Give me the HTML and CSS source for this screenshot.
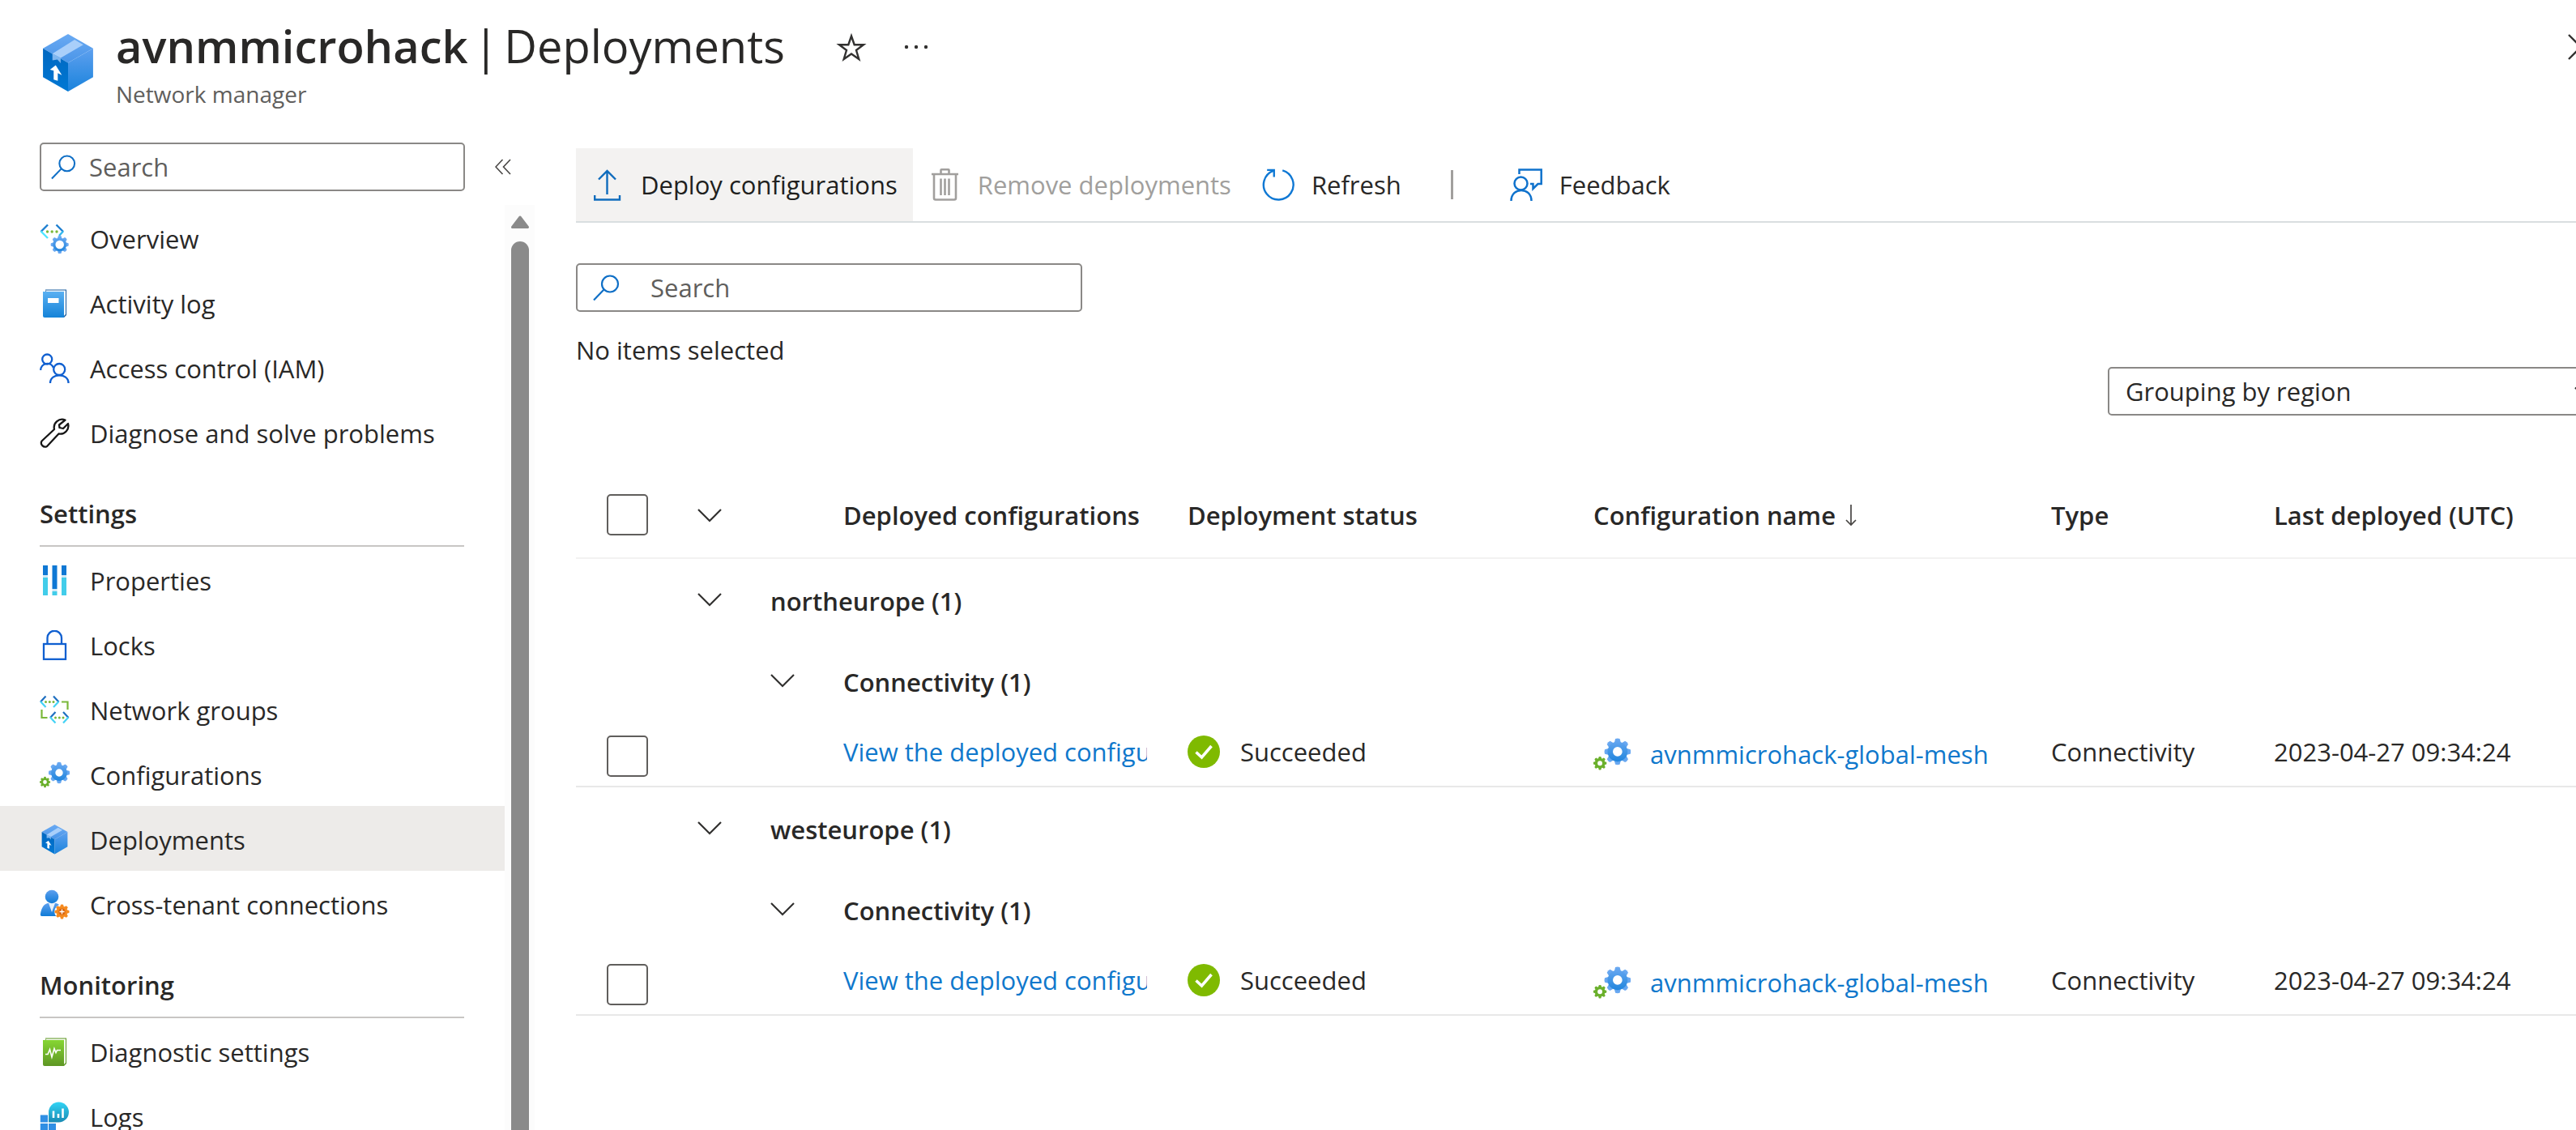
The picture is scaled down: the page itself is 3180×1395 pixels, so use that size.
FILE: index.html
```html
<!DOCTYPE html>
<html lang="en">
<head>
<meta charset="utf-8">
<meta name="viewport" content="width=device-width, initial-scale=1">
<title>avnmmicrohack | Deployments</title>
<link rel="stylesheet" href="styles.css">
</head>
<body>

<!-- Shared icon symbols -->
<svg class="sprite" aria-hidden="true">
  <defs>
    <linearGradient id="box-right" x1="0" y1="0" x2="0" y2="1"><stop offset="0" stop-color="#5ea0ef"/><stop offset="1" stop-color="#1a83dc"/></linearGradient>
    <linearGradient id="box-left" x1="0" y1="0" x2="0" y2="1"><stop offset="0" stop-color="#0067c0"/><stop offset="1" stop-color="#0078d4"/></linearGradient>
    <linearGradient id="box-top" x1="0" y1="0" x2="0" y2="1"><stop offset="0" stop-color="#6aaaf3"/><stop offset="1" stop-color="#4a95e8"/></linearGradient>
    <linearGradient id="gear-blue" gradientUnits="userSpaceOnUse" x1="0" y1="-10" x2="0" y2="10"><stop offset="0" stop-color="#6daaf2"/><stop offset="1" stop-color="#1580da"/></linearGradient>
    <linearGradient id="book-blue" x1="0" y1="0" x2="0" y2="1"><stop offset="0" stop-color="#5ab0f2"/><stop offset="1" stop-color="#1583d8"/></linearGradient>
    <linearGradient id="book-green" x1="0" y1="0" x2="0" y2="1"><stop offset="0" stop-color="#86d633"/><stop offset="1" stop-color="#5e9624"/></linearGradient>
    <linearGradient id="logs-teal" x1="0" y1="0" x2="0" y2="1"><stop offset="0" stop-color="#32d4f5"/><stop offset="1" stop-color="#198ab3"/></linearGradient>
    <linearGradient id="person-blue" x1="0" y1="0" x2="0" y2="1"><stop offset="0" stop-color="#5ea0ef"/><stop offset="1" stop-color="#0f7bd7"/></linearGradient>
    <path id="tooth" d="M-1.7 -9.8Q0 -10.4 1.7 -9.8L2.7 -6H-2.7Z"/>
    <g id="teeth">
      <use href="#tooth"/><use href="#tooth" transform="rotate(45)"/><use href="#tooth" transform="rotate(90)"/><use href="#tooth" transform="rotate(135)"/>
      <use href="#tooth" transform="rotate(180)"/><use href="#tooth" transform="rotate(225)"/><use href="#tooth" transform="rotate(270)"/><use href="#tooth" transform="rotate(315)"/>
    </g>
    <path id="gear" fill-rule="evenodd" d="M0 -7.6A7.6 7.6 0 1 1 0 7.6A7.6 7.6 0 1 1 0 -7.6ZM0 -3.6A3.6 3.6 0 1 0 0 3.6A3.6 3.6 0 1 0 0 -3.6Z"/>
  </defs>
  <symbol id="i-box" viewBox="0 0 71 71">
    <path fill="url(#box-top)" d="M35.5 0L66 17.5L35.5 35L5 17.5Z"/>
    <path fill="url(#box-left)" d="M5 17.5L35.5 35V70L5 52.5Z"/>
    <path fill="url(#box-right)" d="M66 17.5L35.5 35V70L66 52.5Z"/>
    <path fill="#a9cffa" d="M43.500 7L54 13L26.500 29L16.500 24Z"/>
    <path fill="#7fb6ef" d="M16.500 24L26.500 29V35.500L22.500 31L16.500 32Z"/>
    <path fill="#fff" d="M20.500 38L13.500 43.500L18 44.500V55.500L23 57V47.500L28 50Z"/>
  </symbol>
  <symbol id="i-gears" viewBox="0 0 37 37">
    <g transform="translate(24 16) scale(1.3)" fill="url(#gear-blue)"><use href="#teeth"/><use href="#gear"/></g>
    <g transform="translate(6.500 27.500) scale(.66)" fill="#6bb02c"><use href="#teeth"/><use href="#gear"/></g>
  </symbol>
  <symbol id="i-search" viewBox="0 0 33 33">
    <g fill="none" stroke="#0f6fc6" stroke-width="2.200"><circle cx="21" cy="11.500" r="10"/><path d="M13.500 18.500L1 31.500"/></g>
  </symbol>
  <symbol id="i-chevron" viewBox="0 0 30 30">
    <path d="M1 8L15 22L29 8" fill="none" stroke="#323130" stroke-width="2.200"/>
  </symbol>
  <symbol id="i-check" viewBox="0 0 40 40">
    <circle cx="20" cy="20" r="20" fill="#7fba00"/><path d="M10.500 20.500L17.500 27L29.500 13" fill="none" stroke="#fff" stroke-width="3.600"/>
  </symbol>
</svg>

<div class="blade">
  <header class="header">
    <svg class="header-icon" aria-hidden="true"><use href="#i-box"/></svg>
    <div class="header-text">
      <div class="title-row">
        <h1 class="title"><strong>avnmmicrohack</strong><span>|</span><span>Deployments</span></h1>
        <button class="icon-button star" type="button" aria-label="Add to favorites">
          <svg viewBox="0 0 40 40" aria-hidden="true"><path d="M20 6.500L23.700 17.200H35L26 24L29.300 35L20 28.500L10.700 35L14 24L5 17.200H16.300Z" fill="none" stroke="#323130" stroke-width="2.400"/></svg>
        </button>
        <button class="icon-button more" type="button" aria-label="More">
          <svg viewBox="0 0 40 40" aria-hidden="true"><g fill="#323130"><circle cx="8" cy="20" r="2.200"/><circle cx="20" cy="20" r="2.200"/><circle cx="32" cy="20" r="2.200"/></g></svg>
        </button>
      </div>
      <p class="subtitle">Network manager</p>
    </div>
    <button class="icon-button close" type="button" aria-label="Close">
      <svg viewBox="0 0 40 40" aria-hidden="true"><path d="M5 7L35 37M35 7L5 37" stroke="#323130" stroke-width="2.400"/></svg>
    </button>
  </header>

  <div class="body">
    <aside class="sidebar">
      <div class="sidebar-top">
        <div class="field sidebar-field">
          <svg class="field-icon" aria-hidden="true"><use href="#i-search"/></svg>
          <input type="search" placeholder="Search" aria-label="Search menu">
        </div>
        <button class="collapse" type="button" aria-label="Collapse menu">
          <svg viewBox="0 0 20 20" aria-hidden="true"><path d="M9.500 1L1 10L9.500 19M19 1L10.500 10L19 19" fill="none" stroke="#484644" stroke-width="1.600"/></svg>
        </button>
      </div>
      <div class="scroller">
        <nav class="nav" aria-label="Resource menu">
          <a class="nav-item" href="#">
            <svg viewBox="0 0 37 37" aria-hidden="true">
              <g fill="none" stroke-width="2.400"><path d="M10 1.500L1.500 10" stroke="#1e7fd0"/><path d="M1.500 9.500L10 18" stroke="#50e6ff"/><path d="M20.500 1.500L29 10" stroke="#1e7fd0"/><path d="M29 9.500L24 15" stroke="#32b8ee"/></g>
              <g fill="#7ab83a"><circle cx="9.500" cy="10" r="1.700"/><circle cx="15.200" cy="10" r="1.700"/><circle cx="21" cy="10" r="1.700"/></g>
              <g transform="translate(24.700 26) scale(1.100)" fill="url(#gear-blue)"><use href="#teeth"/><use href="#gear"/><circle r="4.800" fill="#fff"/></g>
            </svg>Overview</a>
          <a class="nav-item" href="#">
            <svg viewBox="0 0 37 37" aria-hidden="true"><path d="M7 1.500H33V33L30 36H7Z" fill="#1b5c9e"/><path d="M7 2.500H32V32L30 34Z" fill="#f4f9fe"/><path d="M4 4H30V36H6Q4 36 4 34Z" fill="url(#book-blue)"/><rect x="10" y="12" width="13.500" height="6" fill="#fff"/></svg>Activity log</a>
          <a class="nav-item" href="#">
            <svg viewBox="0 0 37 37" aria-hidden="true"><g fill="none" stroke="#0f5fd0" stroke-width="2.300"><circle cx="9.200" cy="7.500" r="6"/><path d="M1.200 21A8.200 8.200 0 0 1 17 18"/><circle cx="24.200" cy="20" r="7"/><path d="M13 37C13 24 35.500 24 35.500 37"/></g></svg>Access control (IAM)</a>
          <a class="nav-item" href="#">
            <svg viewBox="0 0 37 37" aria-hidden="true"><path d="M31.500 2.500A10 10 0 0 0 18 14L2.500 28.500A4.800 4.800 0 0 0 9 35L23.500 19.500A10 10 0 0 0 35 7L29 13L24.500 12L24 8.500Z" fill="none" stroke="#161616" stroke-width="2.300" stroke-linejoin="round"/></svg>Diagnose and solve problems</a>

          <h2 class="nav-heading">Settings</h2>
          <a class="nav-item" href="#">
            <svg viewBox="0 0 37 37" aria-hidden="true"><g fill="#0f78d4"><rect x="4" width="6" height="12"/><rect x="15.500" width="6" height="29"/><rect x="27" width="6" height="12"/></g><g fill="#cfe9f7"><rect x="4" y="12" width="6" height="3"/><rect x="15.500" y="29" width="6" height="3"/><rect x="27" y="12" width="6" height="3"/></g><g fill="#42cdea"><rect x="4" y="15" width="6" height="22"/><rect x="15.500" y="32" width="6" height="5"/><rect x="27" y="15" width="6" height="22"/></g></svg>Properties</a>
          <a class="nav-item" href="#">
            <svg viewBox="0 0 37 37" aria-hidden="true"><g fill="none" stroke="#0f5fd0" stroke-width="2.300"><path d="M9.500 17V9.500A8.700 8.700 0 0 1 27 9.500V17"/><rect x="5" y="17" width="27" height="18.800"/></g></svg>Locks</a>
          <a class="nav-item" href="#">
            <svg viewBox="0 0 37 37" aria-hidden="true">
              <g fill="none" stroke-width="2.200"><path d="M7.500 1.500L1 8.500M17 1.500L23.500 8.500M19.500 21L13 28M29 21L35.500 28" stroke="#1e6fc0"/><path d="M1 8L7.500 15M23.500 8L17 15M13 27.500L19.500 34.500M35.500 27.500L29 34.500" stroke="#45d3f5"/><path d="M27 8.500H34.500V18M2.500 18V28H9.500" stroke="#7ab83a"/></g>
              <g fill="#7ab83a"><circle cx="7.500" cy="8.500" r="1.500"/><circle cx="12.300" cy="8.500" r="1.500"/><circle cx="17" cy="8.500" r="1.500"/><circle cx="19.500" cy="28" r="1.500"/><circle cx="24.300" cy="28" r="1.500"/><circle cx="29" cy="28" r="1.500"/></g>
            </svg>Network groups</a>
          <a class="nav-item" href="#"><svg aria-hidden="true"><use href="#i-gears"/></svg>Configurations</a>
          <a class="nav-item selected" href="#" aria-current="page"><svg aria-hidden="true"><use href="#i-box"/></svg>Deployments</a>
          <a class="nav-item" href="#">
            <svg viewBox="0 0 37 37" aria-hidden="true"><path d="M.8 31C2 22 6 17.500 10 17H20C25 18 28 23 28.500 33H2.500Q.8 33 .8 31Z" fill="url(#person-blue)"/><path d="M11 17H19L15 28Z" fill="#e6f1fc"/><circle cx="15" cy="9" r="8.300" fill="url(#person-blue)"/><circle cx="27.500" cy="27.500" r="9.300" fill="#fff"/><g transform="translate(27.500 27.500) scale(.9)" fill="#f58a1f"><use href="#teeth"/><circle r="7.600"/></g><circle cx="27.500" cy="27.500" r="4" fill="#d9640c"/><path d="M27.500 24.500V30.500M24.500 27.500H30.500" stroke="#fff" stroke-width="1.300"/></svg>Cross-tenant connections</a>

          <h2 class="nav-heading">Monitoring</h2>
          <a class="nav-item" href="#">
            <svg viewBox="0 0 37 37" aria-hidden="true"><path d="M7 1.500H33V33L30 36H7Z" fill="#5e9624"/><path d="M7 2.500H32V32L30 34Z" fill="#f4f9ee"/><path d="M4 4H30V36H6Q4 36 4 34Z" fill="url(#book-green)"/><path d="M7 21.500H10L12.500 15.500L15 25L18 14.500L20 19.500L21.500 16.500H26" fill="none" stroke="#fff" stroke-width="1.600"/></svg>Diagnostic settings</a>
          <a class="nav-item" href="#">
            <svg viewBox="0 0 37 37" aria-hidden="true"><path d="M.8 16.500H10V25.500H.8ZM.8 27H10V36.500H.8ZM11 27H20V36.500H11Z" fill="#2f8fe4"/><path d="M11 13A12.500 12.500 0 1 1 23.500 25.500H11Z" fill="url(#logs-teal)"/><path d="M17 11.500V20M23 15V20M28.500 8.500V20" stroke="#fff" stroke-width="2.600"/></svg>Logs</a>
        </nav>
        <div class="scrollbar" aria-hidden="true">
          <svg class="scroll-up" viewBox="0 0 24 18"><path d="M12 3L21.500 15.500H2.500Z" fill="#8a8a8a" stroke="#8a8a8a" stroke-width="3" stroke-linejoin="round"/></svg>
          <div class="scroll-thumb"></div>
        </div>
      </div>
    </aside>

    <main class="main">
      <div class="toolbar" role="toolbar" aria-label="Commands">
        <button class="command active" type="button">
          <svg viewBox="0 0 40 40" aria-hidden="true"><g fill="none" stroke="#0f6cbd" stroke-width="2.400"><path d="M19.500 32V3.500M9 13.500L19.500 3L30 13.500"/><path d="M4.200 33V38.500H35V33"/></g></svg>Deploy configurations</button>
        <button class="command" type="button" disabled>
          <svg viewBox="0 0 40 40" aria-hidden="true"><g fill="none" stroke="#a19f9d" stroke-width="2.600"><path d="M4 7H37M15.500 7V2Q15.500 1.300 16.200 1.300H24.800Q25.500 1.300 25.500 2V7M7 7V36.500Q7 38.500 9 38.500H32Q34 38.500 34 36.500V7M15.500 12.500V33M20.500 12.500V33M25.500 12.500V33"/></g></svg>Remove deployments</button>
        <button class="command" type="button">
          <svg viewBox="0 0 42 42" aria-hidden="true"><g fill="none" stroke="#0f78d4" stroke-width="2.500"><path d="M26.500 2.500A19.300 19.300 0 1 1 14.500 3"/><path d="M6.500 2H15.500V11"/></g></svg>Refresh</button>
        <span class="divider"></span>
        <button class="command" type="button">
          <svg viewBox="0 0 40 40" aria-hidden="true"><g fill="none" stroke="#0f72cc" stroke-width="2.500"><circle cx="13.500" cy="18.500" r="8"/><path d="M1.500 40C1.500 22.500 26.500 22.500 26.500 40M11.500 7V1.500H38.700V19H34.500L28.500 25V19H25"/></g></svg>Feedback</button>
      </div>

      <div class="field main-field">
        <svg class="field-icon" aria-hidden="true"><use href="#i-search"/></svg>
        <input type="search" placeholder="Search" aria-label="Search deployments">
      </div>
      <p class="selection">No items selected</p>

      <div class="grouping">
        <select aria-label="Grouping">
          <option>Grouping by region</option>
        </select>
        <svg class="grouping-arrow" aria-hidden="true"><use href="#i-chevron"/></svg>
      </div>

      <table class="grid">
        <colgroup>
          <col class="c-pick"><col class="c-toggle"><col class="c-toggle"><col class="c-deployed"><col class="c-status"><col class="c-name"><col class="c-type"><col>
        </colgroup>
        <thead>
          <tr>
            <th class="pick"><input type="checkbox" aria-label="Select all"></th>
            <th><button class="toggle" type="button" aria-label="Collapse all"><svg aria-hidden="true"><use href="#i-chevron"/></svg></button></th>
            <th></th>
            <th scope="col">Deployed configurations</th>
            <th scope="col">Deployment status</th>
            <th scope="col"><span class="sorted">Configuration name <svg class="sort" viewBox="0 0 14 28" aria-hidden="true"><path d="M7 1V26M1 20L7 26L13 20" fill="none" stroke="#484644" stroke-width="1.700"/></svg></span></th>
            <th scope="col">Type</th>
            <th scope="col">Last deployed (UTC)</th>
          </tr>
        </thead>
        <tbody>
          <tr class="group">
            <td></td>
            <td><button class="toggle" type="button" aria-label="Collapse northeurope"><svg aria-hidden="true"><use href="#i-chevron"/></svg></button></td>
            <td class="group-name" colspan="6">northeurope (1)</td>
          </tr>
          <tr class="group">
            <td></td><td></td>
            <td><button class="toggle" type="button" aria-label="Collapse Connectivity"><svg aria-hidden="true"><use href="#i-chevron"/></svg></button></td>
            <td class="group-name" colspan="5">Connectivity (1)</td>
          </tr>
          <tr class="item">
            <td class="pick"><input type="checkbox" aria-label="Select northeurope deployment"></td>
            <td></td><td></td>
            <td><a class="clip" href="#">View the deployed configuration</a></td>
            <td><span class="status"><svg aria-hidden="true"><use href="#i-check"/></svg>Succeeded</span></td>
            <td class="config"><a class="config-link" href="#"><svg aria-hidden="true"><use href="#i-gears"/></svg>avnmmicrohack-global-mesh</a></td>
            <td>Connectivity</td>
            <td>2023-04-27 09:34:24</td>
          </tr>
        </tbody>
        <tbody>
          <tr class="group">
            <td></td>
            <td><button class="toggle" type="button" aria-label="Collapse westeurope"><svg aria-hidden="true"><use href="#i-chevron"/></svg></button></td>
            <td class="group-name" colspan="6">westeurope (1)</td>
          </tr>
          <tr class="group">
            <td></td><td></td>
            <td><button class="toggle" type="button" aria-label="Collapse Connectivity"><svg aria-hidden="true"><use href="#i-chevron"/></svg></button></td>
            <td class="group-name" colspan="5">Connectivity (1)</td>
          </tr>
          <tr class="item">
            <td class="pick"><input type="checkbox" aria-label="Select westeurope deployment"></td>
            <td></td><td></td>
            <td><a class="clip" href="#">View the deployed configuration</a></td>
            <td><span class="status"><svg aria-hidden="true"><use href="#i-check"/></svg>Succeeded</span></td>
            <td class="config"><a class="config-link" href="#"><svg aria-hidden="true"><use href="#i-gears"/></svg>avnmmicrohack-global-mesh</a></td>
            <td>Connectivity</td>
            <td>2023-04-27 09:34:24</td>
          </tr>
        </tbody>
      </table>
    </main>
  </div>
</div>
</body>
</html>
```
FILE: styles.css
```css
* {
  box-sizing: border-box;
}

body {
  margin: 0;
  overflow: hidden;
  background: #fff;
  color: #292827;
  font-family: "Open Sans", "Noto Sans", sans-serif;
  font-size: 31px;
  line-height: 44px;
}

h1, h2, p {
  margin: 0;
}

a {
  color: #0f78cc;
  text-decoration: none;
}

button {
  padding: 0;
  border: 0;
  background: none;
  color: inherit;
  font: inherit;
}

svg {
  display: block;
  flex: none;
}

.sprite {
  position: absolute;
  width: 0;
  height: 0;
}

/* The blade runs past the right edge of the window. */
.blade {
  display: flex;
  flex-direction: column;
  height: 100vh;
  margin-right: -50px;
}

/* Header */
.header {
  display: flex;
  align-items: center;
  gap: 23px;
  padding: 24px 24px 0 48px;
}

.header-icon {
  width: 72px;
  height: 72px;
  margin-bottom: 4px;
}

.header-text {
  flex: 1;
}

.title-row {
  display: flex;
  align-items: center;
}

.title {
  display: flex;
  gap: 7px;
  font-size: 56px;
  font-weight: 400;
  line-height: 64px;
}

.title strong {
  font-weight: 600;
}

.subtitle {
  margin-top: 8px;
  color: #605e5c;
  font-size: 28px;
  line-height: 40px;
}

.icon-button svg {
  width: 40px;
  height: 40px;
}

.star {
  margin-left: 62px;
}

.star,
.more {
  padding-top: 4px;
}

.more {
  margin-left: 40px;
}

.close {
  align-self: flex-start;
  margin-top: 12px;
}

/* Layout */
.body {
  display: flex;
  flex: 1;
  gap: 51px;
  min-height: 0;
}

/* Sidebar */
.sidebar {
  display: flex;
  flex: none;
  flex-direction: column;
  width: 660px;
}

.sidebar-top {
  display: flex;
  align-items: center;
  gap: 37px;
  padding: 40px 0 17px 49px;
}

.collapse svg {
  width: 20px;
  height: 20px;
}

.scroller {
  display: flex;
  flex: 1;
  min-height: 0;
}

.nav {
  flex: 1;
  overflow: hidden;
}

.nav-item {
  display: flex;
  align-items: center;
  gap: 25px;
  height: 80px;
  padding: 3px 0 0 49px;
  color: inherit;
}

.nav-item svg {
  width: 37px;
  height: 37px;
}

.nav-item.selected {
  background: #edebe9;
}

.nav-heading {
  margin: 0 50px 0 49px;
  padding: 39px 0 17px;
  border-bottom: 2px solid #c8c6c4;
  font-size: 31px;
  font-weight: 600;
}

.scrollbar {
  display: flex;
  flex: none;
  flex-direction: column;
  align-items: center;
  gap: 15px;
  width: 37px;
  padding-top: 12px;
  background: #fcfcfc;
}

.scroll-up {
  width: 24px;
  height: 18px;
}

.scroll-thumb {
  flex: 1;
  width: 22px;
  border-radius: 11px 11px 0 0;
  background: #8a8a8a;
}

/* Text fields */
.field {
  display: flex;
  align-items: center;
  height: 60px;
  border: 2px solid #8a8886;
  border-radius: 5px;
}

.field input {
  flex: 1;
  min-width: 0;
  padding: 0;
  border: 0;
  outline: 0;
  background: none;
  color: inherit;
  font: inherit;
}

.field input::placeholder {
  color: #605e5c;
  opacity: 1;
}

.sidebar-field {
  gap: 16px;
  width: 525px;
  padding: 0 12px;
}

.sidebar-field .field-icon {
  width: 31px;
  height: 31px;
}

.main-field {
  gap: 38px;
  width: 625px;
  margin-top: 50px;
  padding: 0 19px;
}

.main-field .field-icon {
  width: 33px;
  height: 33px;
}

/* Main */
.main {
  flex: 1;
  min-width: 0;
  padding-top: 47px;
}

.toolbar {
  display: flex;
  align-items: center;
  height: 92px;
  border-bottom: 2px solid #d9dee0;
}

.command {
  display: flex;
  align-items: center;
  gap: 21px;
  height: 90px;
  padding: 0 19px;
  white-space: nowrap;
}

.command svg {
  width: 40px;
  height: 40px;
}

.command.active {
  background: #f3f2f1;
  color: #201f1e;
}

.command:disabled {
  color: #a19f9d;
}

.divider {
  width: 3px;
  height: 36px;
  margin: 0 51px 0 42px;
  background: #a19f9d;
}

.selection {
  margin-top: 26px;
  line-height: 42px;
}

.grouping {
  position: relative;
  width: 628px;
  margin-left: auto;
}

.grouping select {
  display: block;
  width: 100%;
  height: 60px;
  padding: 0 60px 0 20px;
  border: 2px solid #8a8886;
  border-radius: 5px;
  appearance: none;
  background: #fff;
  color: inherit;
  font: inherit;
}

.grouping-arrow {
  position: absolute;
  top: 18px;
  right: 24px;
  width: 28px;
  height: 28px;
  pointer-events: none;
}

/* Deployments table */
.grid {
  width: 100%;
  margin-top: 70px;
  border-spacing: 0;
  table-layout: fixed;
}

.c-pick {
  width: 150px;
}

.c-toggle {
  width: 90px;
}

.c-deployed {
  width: 425px;
}

.c-status {
  width: 501px;
}

.c-name {
  width: 565px;
}

.c-type {
  width: 275px;
}

.grid th,
.grid td {
  padding: 0;
  text-align: left;
  white-space: nowrap;
}

.grid th {
  height: 107px;
  border-bottom: 2px solid #f3f2f1;
  font-weight: 600;
}

.grid .pick {
  padding-left: 38px;
}

.pick input {
  display: block;
  width: 51px;
  height: 51px;
  margin: 0;
  border: 2px solid #605e5c;
  border-radius: 5px;
  appearance: none;
  background: #fff;
}

.toggle {
  display: block;
}

.toggle svg {
  width: 30px;
  height: 30px;
}

.group td {
  height: 100px;
}

.grid .group-name {
  padding-top: 4px;
  font-weight: 600;
}

.item td {
  height: 82px;
  border-bottom: 2px solid #e8e8e8;
}

.grid .item td {
  padding-bottom: 4px;
}

.grid .item .pick {
  padding-top: 7px;
  padding-bottom: 0;
}

.grid .item .config {
  padding-top: 2px;
  padding-bottom: 0;
}

.clip {
  display: block;
  width: 375px;
  overflow: hidden;
}

.sorted {
  display: flex;
  align-items: center;
  gap: 12px;
}

.sort {
  width: 14px;
  height: 28px;
}

.status {
  display: flex;
  align-items: center;
  gap: 25px;
}

.status svg {
  width: 40px;
  height: 40px;
}

.config-link {
  display: flex;
  align-items: center;
  gap: 24px;
}

.config-link svg {
  width: 46px;
  height: 46px;
}
```
